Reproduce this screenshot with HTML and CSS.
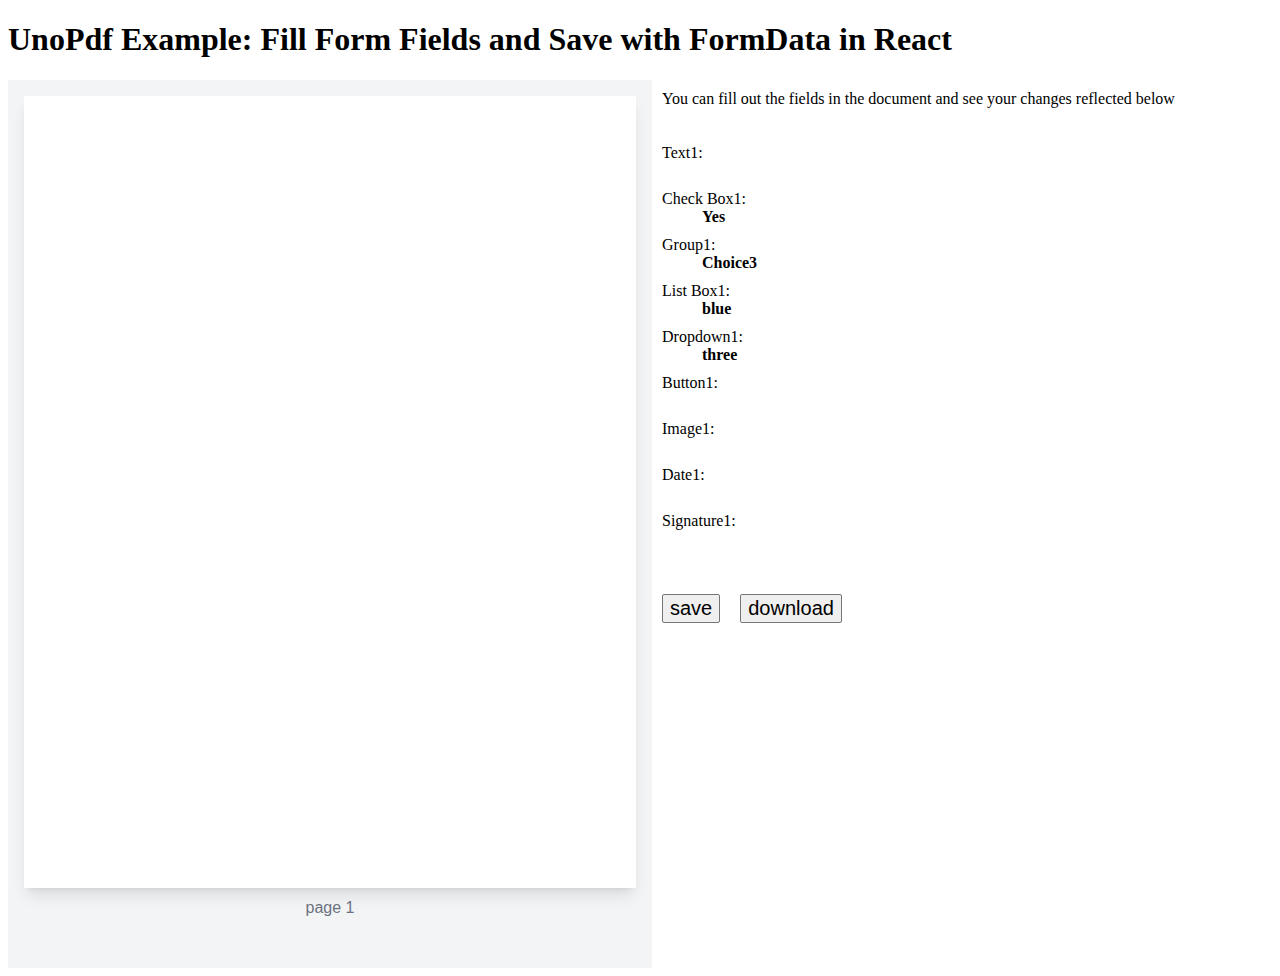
FILE: index.html
```html
<!DOCTYPE html>
<html lang="en">
<head>
  <meta charset="UTF-8" />
  <meta name="viewport" content="width=device-width, initial-scale=1.0" />
  <title>UnoPdf Example: Fill Form Fields and Save with FormData in React</title>
  <link rel="stylesheet" href="styles.css">
</head>
<body>

  <h1>UnoPdf Example: Fill Form Fields and Save with FormData in React</h1>

  <div class="layout">
    <div class="viewer">
      <div class="page"></div>
      <div class="page-label">page 1</div>
    </div>

    <div class="sidebar">
      <p class="intro">You can fill out the fields in the document and see your changes reflected below</p>

      <dl class="fields">
        <div class="field"><dt>Text1:</dt><dd></dd></div>
        <div class="field"><dt>Check Box1:</dt><dd>Yes</dd></div>
        <div class="field"><dt>Group1:</dt><dd>Choice3</dd></div>
        <div class="field"><dt>List Box1:</dt><dd>blue</dd></div>
        <div class="field"><dt>Dropdown1:</dt><dd>three</dd></div>
        <div class="field"><dt>Button1:</dt><dd></dd></div>
        <div class="field"><dt>Image1:</dt><dd></dd></div>
        <div class="field"><dt>Date1:</dt><dd></dd></div>
        <div class="field"><dt>Signature1:</dt><dd></dd></div>
      </dl>

      <div class="actions">
        <button type="button">save</button>
        <button type="button">download</button>
      </div>
    </div>
  </div>

</body>
</html>
```

FILE: styles.css
```css
body {
  margin: 8px;
  font-family: 'Liberation Serif', 'Times New Roman', serif;
  color: #000;
  background: #fff;
}
h1 { font-size: 32px; margin: 13px 0 22px; line-height: 37px; }

.layout { display: flex; gap: 10px; align-items: flex-start; }

.viewer { width: 644px; height: 888px; background-color: #f3f4f6; padding: 16px; box-sizing: border-box; flex-shrink: 0; }
.page { width: 612px; height: 792px; background: #fff; box-shadow: 0 10px 15px -3px rgba(0,0,0,0.1), 0 4px 6px -4px rgba(0,0,0,0.1); }
.page-label { text-align: center; padding-top: 11px; font-family: 'Liberation Sans', Arial, sans-serif; font-size: 16px; color: #6b7280; }

.sidebar { padding-top: 10px; font-size: 16px; line-height: 18px; }
.intro { margin: 0 0 36px; }
.fields { margin: 0; }
.field { margin-bottom: 10px; }
.fields dt { min-height: 18px; }
.fields dd { margin-left: 40px; min-height: 18px; font-weight: bold; }

.actions { margin-top: 46px; display: flex; gap: 20px; }
.actions button { font-family: 'Liberation Sans', Arial, sans-serif; font-size: 20px; line-height: 23px; padding: 2px 7px; border: 1px solid #767676; border-radius: 2px; background: #efefef; color: #000; }
```
